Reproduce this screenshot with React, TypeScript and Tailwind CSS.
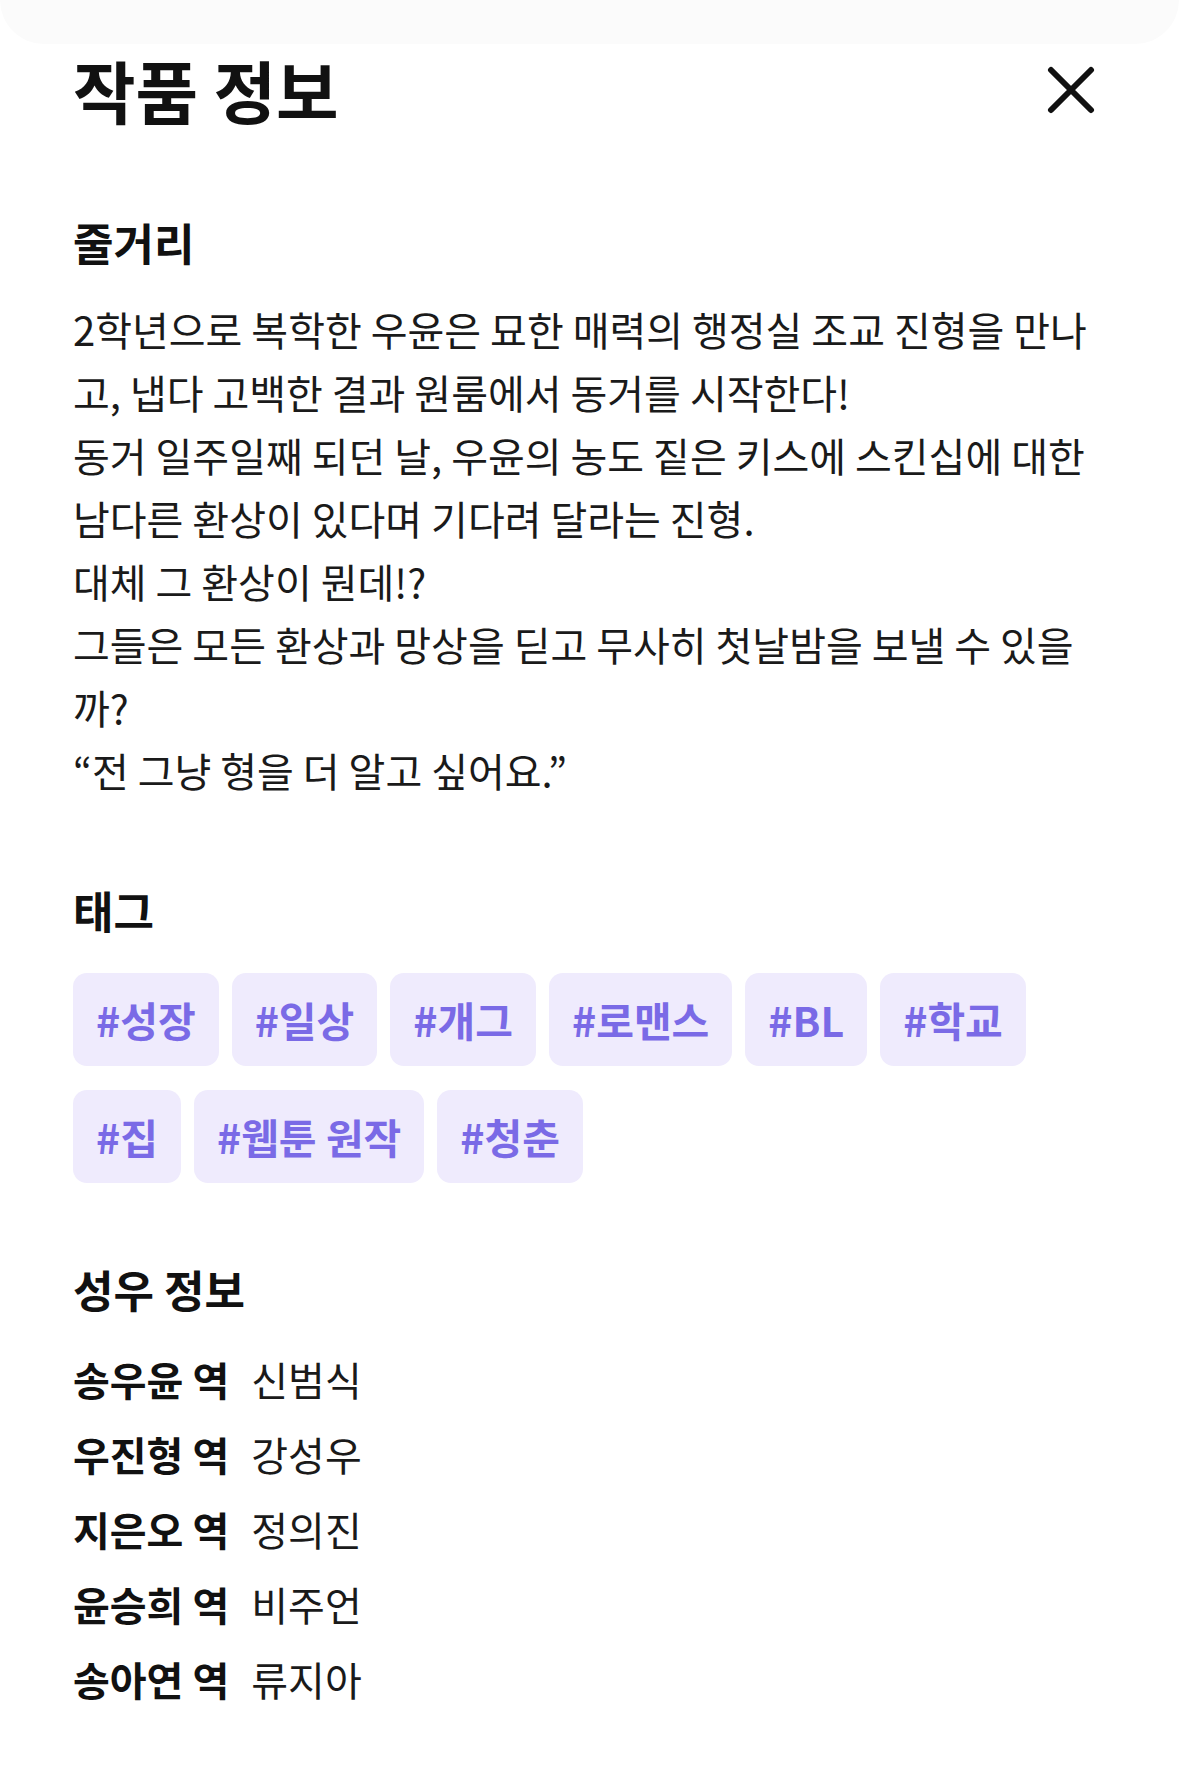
const synopsis = [
  '2학년으로 복학한 우윤은 묘한 매력의 행정실 조교 진형을 만나고, 냅다 고백한 결과 원룸에서 동거를 시작한다!',
  '동거 일주일째 되던 날, 우윤의 농도 짙은 키스에 스킨십에 대한 남다른 환상이 있다며 기다려 달라는 진형.',
  '대체 그 환상이 뭔데!?',
  '그들은 모든 환상과 망상을 딛고 무사히 첫날밤을 보낼 수 있을까?',
  '“전 그냥 형을 더 알고 싶어요.”',
];

const tags = ['성장', '일상', '개그', '로맨스', 'BL', '학교', '집', '웹툰 원작', '청춘'];

const cast = [
  { role: '송우윤', actor: '신범식' },
  { role: '우진형', actor: '강성우' },
  { role: '지은오', actor: '정의진' },
  { role: '윤승희', actor: '비주언' },
  { role: '송아연', actor: '류지아' },
];

function CloseIcon() {
  return (
    <svg width="48" height="48" viewBox="0 0 48 48" fill="none">
      <path d="M4 4L44 44M44 4L4 44" stroke="#111111" strokeWidth="6" strokeLinecap="round" />
    </svg>
  );
}

export default function App() {
  return (
    <div
      className="relative min-h-[1785px] w-[1179px] bg-white text-[#111111]"
      style={{ fontFamily: '"Noto Sans CJK KR", "Noto Sans", sans-serif' }}
    >
      {/* sheet edge peeking above */}
      <div className="h-[44px] rounded-b-[60px] bg-[#fbfbfb]" />

      <div className="pl-[73px] pr-[80px]">
        {/* Header */}
        <div className="mt-[6px] flex h-[80px] items-center justify-between">
          <h1 className="text-[68px] font-bold leading-[80px]">작품 정보</h1>
          <button className="mr-[4px]">
            <CloseIcon />
          </button>
        </div>

        {/* Synopsis */}
        <section className="mt-[84px]">
          <h2 className="text-[44px] font-bold leading-[56px]">줄거리</h2>
          <div className="mt-[28px] text-[40px] leading-[63px] text-[#1a1a1a]">
            {synopsis.map((line) => (
              <p key={line}>{line}</p>
            ))}
          </div>
        </section>

        {/* Tags */}
        <section className="mt-[80px]">
          <h2 className="text-[44px] font-bold leading-[56px]">태그</h2>
          <div className="mt-[35px] flex flex-wrap gap-x-[13px] gap-y-[24px]">
            {tags.map((tag) => (
              <span
                key={tag}
                className="flex h-[93px] items-center rounded-[14px] bg-[#efebfd] px-[23px] text-[41px] font-bold text-[#7a6ae6]"
              >
                #{tag}
              </span>
            ))}
          </div>
        </section>

        {/* Cast */}
        <section className="mt-[78px]">
          <h2 className="text-[44px] font-bold leading-[56px]">성우 정보</h2>
          <div className="mt-[24px]">
            {cast.map((c) => (
              <div key={c.role} className="flex h-[75px] items-center gap-[22px] text-[40px]">
                <span className="font-bold">{c.role} 역</span>
                <span className="text-[#1a1a1a]">{c.actor}</span>
              </div>
            ))}
          </div>
        </section>
      </div>
    </div>
  );
}
